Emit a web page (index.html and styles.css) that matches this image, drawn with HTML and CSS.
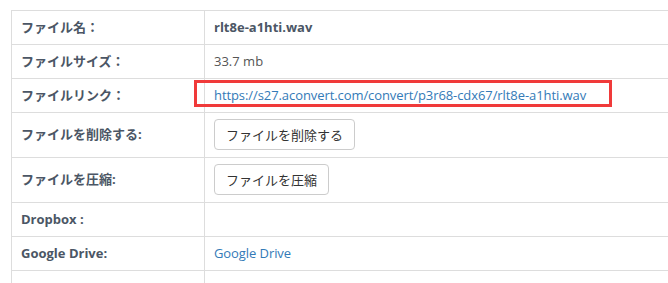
FILE: index.html
```html
<!DOCTYPE html>
<html lang="ja">
<head>
<meta charset="utf-8">
<title>ファイル情報</title>
<link rel="stylesheet" href="styles.css">
</head>
<body>
<table class="info">
  <tbody>
    <tr>
      <th class="label">ファイル名：</th>
      <td class="value strong">rlt8e-a1hti.wav</td>
    </tr>
    <tr>
      <th class="label">ファイルサイズ：</th>
      <td class="value">33.7 mb</td>
    </tr>
    <tr>
      <th class="label">ファイルリンク：</th>
      <td class="value anchor-cell"><a class="link" href="#">https://s27.aconvert.com/convert/p3r68-cdx67/rlt8e-a1hti.wav</a><span class="highlight"></span></td>
    </tr>
    <tr class="btn-row">
      <th class="label">ファイルを削除する:</th>
      <td class="value"><button class="btn" type="button">ファイルを削除する</button></td>
    </tr>
    <tr class="btn-row">
      <th class="label">ファイルを圧縮:</th>
      <td class="value"><button class="btn" type="button">ファイルを圧縮</button></td>
    </tr>
    <tr>
      <th class="label">Dropbox :</th>
      <td class="value"></td>
    </tr>
    <tr>
      <th class="label">Google Drive:</th>
      <td class="value"><a class="link" href="#">Google Drive</a></td>
    </tr>
    <tr>
      <th class="label">&nbsp;</th>
      <td class="value">&nbsp;</td>
    </tr>
  </tbody>
</table>
</body>
</html>
```

FILE: styles.css
```css
html, body {
  overflow: hidden;
}
body {
  margin: 0;
  padding: 10px 0 0 11px;
  background: #fff;
  font-family: "Open Sans", "Noto Sans CJK JP", sans-serif;
  font-size: 13px;
  line-height: 17px;
  color: #555;
}
.info {
  border-collapse: collapse;
  width: 720px;
  border-spacing: 0;
}
.info th,
.info td {
  border: 1px solid #ddd;
  padding: 8px 8px 8px 9px;
  text-align: left;
  vertical-align: middle;
}
.label {
  width: 175px;
  font-weight: 700;
  color: #4b5665;
}
.value {
  font-weight: 400;
  color: #555;
  padding-left: 6px;
}
.strong {
  font-weight: 700;
  color: #4b5665;
}
.link {
  color: #337ab7;
  text-decoration: none;
  letter-spacing: -0.08px;
}
.anchor-cell {
  position: relative;
}
.highlight {
  position: absolute;
  left: -11px;
  top: 1px;
  width: 412px;
  height: 21px;
  border: 3px solid #f03a3a;
}
.btn-row td,
.btn-row th {
  padding-top: 6px;
  padding-bottom: 7px;
}
.btn {
  display: inline-block;
  height: 31px;
  margin: 0;
  padding: 0 11px;
  font-family: "Noto Sans CJK JP", sans-serif;
  font-size: 13px;
  font-weight: 400;
  line-height: 29px;
  color: #333;
  background: #fff;
  border: 1px solid #ccc;
  border-radius: 4px;
}
```
